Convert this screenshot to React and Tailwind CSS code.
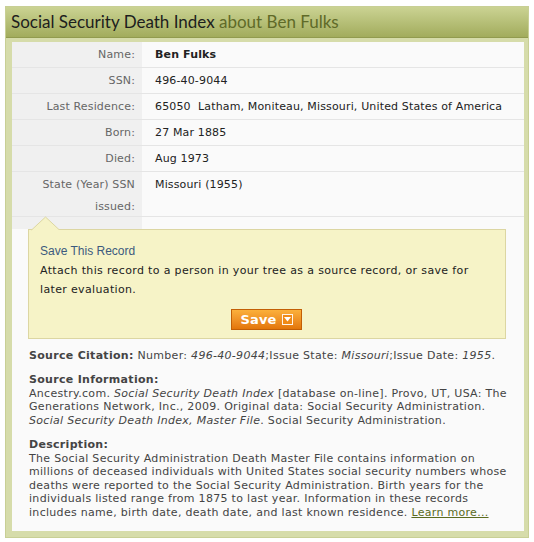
import React from "react";

const rows = [
  { label: "Name:", value: "Ben Fulks", bold: true },
  { label: "SSN:", value: "496-40-9044" },
  { label: "Last Residence:", value: "65050\u00a0\u00a0Latham, Moniteau, Missouri, United States of America" },
  { label: "Born:", value: "27 Mar 1885" },
  { label: "Died:", value: "Aug 1973" },
  { label: "State (Year) SSN issued:", value: "Missouri (1955)", tall: true },
];

const SaveButton = () => (
  <button className="flex items-center gap-[5px] h-[21px] px-[8px] border border-[#c25f06] bg-gradient-to-b from-[#fbb03b] to-[#e37608] text-white font-bold text-[13px] leading-none">
    Save
    <span className="flex items-center justify-center w-[11px] h-[11px] border border-white/90 bg-[#f08a16]">
      <svg width="7" height="5" viewBox="0 0 7 5">
        <path d="M0 0h7L3.5 4.5z" fill="#fff" />
      </svg>
    </span>
  </button>
);

export default function App() {
  return (
    <div className="bg-white w-[534px] h-[542px] pl-[5px] pt-[6px] font-['DejaVu_Sans',Verdana,sans-serif]">
      <div className="w-[524px] bg-[#d6dcaa] border border-[#c8cf95]">
        {/* titre */}
        <div className="h-[31px] flex items-center px-[5px] bg-gradient-to-b from-[#cbd393] to-[#a2ac5c] border-b border-[#919b4e]">
          <h1 className="text-[17px] text-[#1d1d1d] font-['Lato',sans-serif]">
            Social Security Death Index <span className="text-[#5f6a28]">about Ben Fulks</span>
          </h1>
        </div>

        <div className="pl-[6px] pr-[4px] pt-[4px] pb-[6px]">
          <div className="bg-[#fafafa] text-[11px] tracking-[0.15px] pb-[12px]">
            {rows.map((r) => (
              <div key={r.label} className="flex border-b border-[#e5e5e5]">
                <div className={`w-[130px] shrink-0 bg-[#f0f0f0] text-[#666] text-right pr-[7px] pl-[20px] leading-[22px] pt-[2px] ${r.tall ? "h-[44px]" : "h-[25px]"}`}>
                  {r.label}
                </div>
                <div className={`pl-[13px] pt-[2px] leading-[22px] text-[#222] ${r.bold ? "font-bold" : ""}`}>{r.value}</div>
              </div>
            ))}

            {/* boite enregistrer */}
            <div className="flex">
              <div className="w-[130px] h-[12px] bg-[#f0f0f0]" />
            </div>
            <div className="relative ml-[16px] mr-[18px] h-[110px] bg-[#f6f3c7] border border-[#dcd6a2] pl-[11px] pr-[12px] pt-[12px]">
              <svg className="absolute left-[2px] top-[-14px]" width="30" height="15" viewBox="0 0 30 15">
                <path d="M0 14.5L14.5 1 29 14.5" fill="#f6f3c7" stroke="#dcd6a2" />
                <rect x="0.5" y="14" width="29" height="2" fill="#f6f3c7" />
              </svg>
              <div className="text-[12px] tracking-normal text-[#3c5a7e] font-['Liberation_Sans',Arial,sans-serif] leading-[19px]">Save This Record</div>
              <p className="text-[#222] leading-[19px] tracking-[0.35px]">
                Attach this record to a person in your tree as a source record, or save for later evaluation.
              </p>
              <div className="flex justify-center mt-[10px]">
                <SaveButton />
              </div>
            </div>

            {/* sources */}
            <div className="pl-[17px] pr-[14px] pt-[10px] text-[#444] leading-[13.5px] tracking-[0.3px]">
              <p>
                <b>Source Citation:</b> Number: <i>496-40-9044</i>;Issue State: <i>Missouri</i>;Issue Date: <i>1955</i>.
              </p>
              <p className="mt-[10.5px]">
                <b>Source Information:</b>
                <br />
                Ancestry.com. <i>Social Security Death Index</i> [database on-line]. Provo, UT, USA: The Generations Network, Inc., 2009. Original data: Social Security Administration. <i>Social Security Death Index, Master File</i>. Social Security Administration.
              </p>
              <p className="mt-[11px]">
                <b>Description:</b>
                <br />
                The Social Security Administration Death Master File contains information on millions of deceased individuals with United States social security numbers whose deaths were reported to the Social Security Administration. Birth years for the individuals listed range from 1875 to last year. Information in these records includes name, birth date, death date, and last known residence.{" "}
                <a href="#" className="text-[#5b6b1e] underline">Learn more...</a>
              </p>
            </div>
          </div>
        </div>
      </div>
    </div>
  );
}
